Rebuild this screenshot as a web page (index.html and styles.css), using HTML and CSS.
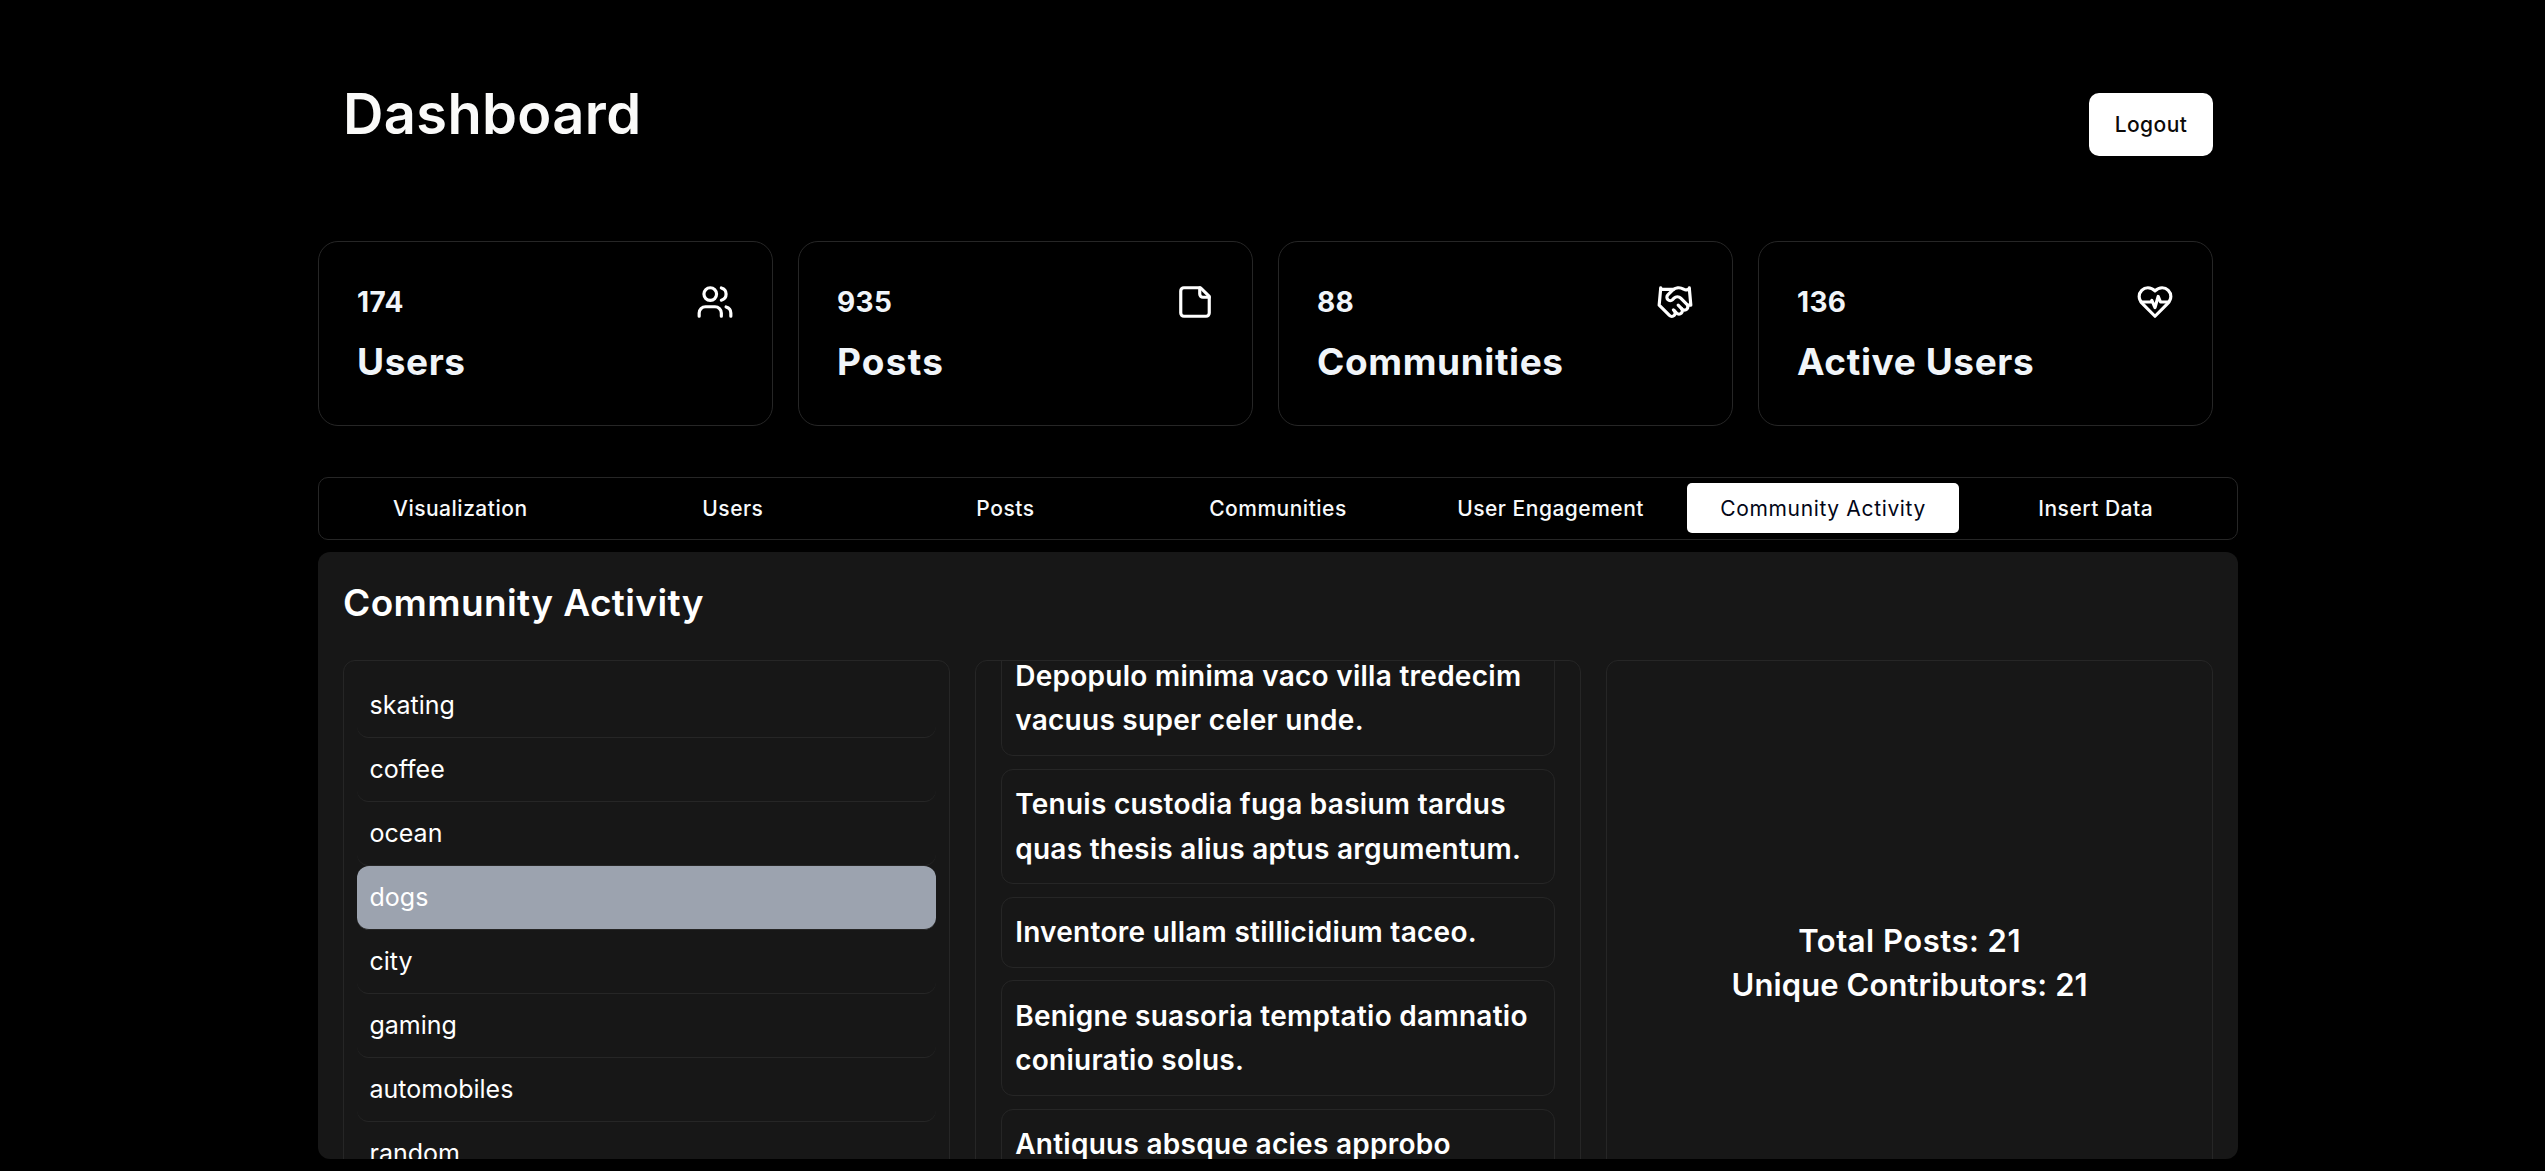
FILE: index.html
```html
<!DOCTYPE html>
<html lang="en">
<head>
<meta charset="utf-8">
<title>Dashboard</title>
<link rel="stylesheet" href="styles.css">
</head>
<body>
<main class="page">
  <header class="header">
    <h1 class="title">Dashboard</h1>
    <button class="logout">Logout</button>
  </header>

  <section class="stats">
    <article class="stat">
      <div class="stat-row"><span class="stat-value">174</span>
        <svg class="icon" viewBox="0 0 24 24"><path d="M16 21v-2a4 4 0 0 0-4-4H6a4 4 0 0 0-4 4v2"/><circle cx="9" cy="7" r="4"/><path d="M22 21v-2a4 4 0 0 0-3-3.87"/><path d="M16 3.13a4 4 0 0 1 0 7.75"/></svg>
      </div>
      <h2 class="stat-label">Users</h2>
    </article>
    <article class="stat">
      <div class="stat-row"><span class="stat-value">935</span>
        <svg class="icon" viewBox="0 0 24 24"><path d="M15.5 3H5a2 2 0 0 0-2 2v14c0 1.1.9 2 2 2h14a2 2 0 0 0 2-2V8.5L15.5 3Z"/><path d="M15 3v4a2 2 0 0 0 2 2h4"/></svg>
      </div>
      <h2 class="stat-label posts-label">Posts</h2>
    </article>
    <article class="stat">
      <div class="stat-row"><span class="stat-value">88</span>
        <svg class="icon" viewBox="0 0 24 24"><path d="m11 17 2 2a1 1 0 1 0 3-3"/><path d="m14 14 2.5 2.5a1 1 0 1 0 3-3l-3.88-3.88a3 3 0 0 0-4.24 0l-.88.88a1 1 0 1 1-3-3l2.81-2.81a5.79 5.79 0 0 1 7.06-.87l.47.28a2 2 0 0 0 1.42.25L21 4"/><path d="m21 3 1 11h-2"/><path d="M3 3 2 14l6.5 6.5a1 1 0 1 0 3-3"/><path d="M3 4h8"/></svg>
      </div>
      <h2 class="stat-label">Communities</h2>
    </article>
    <article class="stat">
      <div class="stat-row"><span class="stat-value">136</span>
        <svg class="icon" viewBox="0 0 24 24"><path d="M19 14c1.49-1.46 3-3.21 3-5.5A5.5 5.5 0 0 0 16.5 3c-1.76 0-3 .5-4.5 2-1.5-1.5-2.74-2-4.5-2A5.5 5.5 0 0 0 2 8.5c0 2.3 1.5 4.05 3 5.5l7 7Z"/><path d="M3.22 12H9.5l.5-1 2 4.5 2-7 1.5 3.5h5.27"/></svg>
      </div>
      <h2 class="stat-label">Active Users</h2>
    </article>
  </section>

  <nav class="tabs">
    <button class="tab">Visualization</button>
    <button class="tab">Users</button>
    <button class="tab">Posts</button>
    <button class="tab">Communities</button>
    <button class="tab">User Engagement</button>
    <button class="tab active">Community Activity</button>
    <button class="tab">Insert Data</button>
  </nav>

  <section class="panel">
    <h2 class="panel-title">Community Activity</h2>
    <div class="columns">
      <ul class="column communities">
        <li class="community">skating</li>
        <li class="community">coffee</li>
        <li class="community">ocean</li>
        <li class="community selected">dogs</li>
        <li class="community">city</li>
        <li class="community">gaming</li>
        <li class="community">automobiles</li>
        <li class="community">random</li>
      </ul>
      <div class="column posts">
        <article class="post">Depopulo minima vaco villa tredecim vacuus super celer unde.</article>
        <article class="post">Tenuis custodia fuga basium tardus quas thesis alius aptus argumentum.</article>
        <article class="post">Inventore ullam stillicidium taceo.</article>
        <article class="post">Benigne suasoria temptatio damnatio coniuratio solus.</article>
        <article class="post">Antiquus absque acies approbo</article>
      </div>
      <div class="column totals">
        <p>Total Posts: 21</p>
        <p class="contributors">Unique Contributors: 21</p>
      </div>
    </div>
  </section>
</main>
</body>
</html>
```
FILE: styles.css
```css
* {
  box-sizing: border-box;
  margin: 0;
  padding: 0;
}

body {
  background: #000;
  color: #fff;
  font-family: Inter, "Liberation Sans", sans-serif;
  overflow: hidden;
}

button {
  font: inherit;
  border: 0;
}

.page {
  width: 1920px;
  margin-left: 318px;
}

.header {
  display: flex;
  justify-content: space-between;
  align-items: flex-start;
  height: 241px;
  padding: 77px 25px 0;
}

.title {
  font-size: 56px;
  font-weight: 620;
  line-height: 75px;
  letter-spacing: 0.35px;
  color: #fafaf9;
}

.logout {
  width: 124px;
  height: 63px;
  margin-top: 16px;
  border-radius: 10px;
  background: #fff;
  color: #0c0a09;
  font-size: 21px;
  font-weight: 450;
  letter-spacing: 0.45px;
}

.stats {
  display: grid;
  grid-template-columns: repeat(4, 1fr);
  gap: 25px;
  padding-right: 25px;
}

.stat {
  height: 185px;
  padding: 37.5px 38px;
  border: 1px solid #262626;
  border-radius: 20px;
  color: #f1f5f9;
}

.stat-row {
  display: flex;
  justify-content: space-between;
  align-items: center;
  height: 45px;
}

.stat-value {
  font-size: 28px;
  font-weight: 650;
  letter-spacing: 0.35px;
}

.stat-label {
  margin-top: 14.5px;
  font-size: 37px;
  font-weight: 700;
  line-height: 45px;
  letter-spacing: 0.6px;
}

.posts-label {
  letter-spacing: 1.2px;
}

.icon {
  width: 38px;
  height: 38px;
  fill: none;
  stroke: #fff;
  stroke-width: 2;
  stroke-linecap: round;
  stroke-linejoin: round;
}

.tabs {
  display: grid;
  grid-template-columns: repeat(7, 1fr);
  height: 63px;
  margin-top: 51px;
  padding: 5px;
  border: 1px solid #262626;
  border-radius: 10px;
}

.tab {
  border-radius: 5px;
  background: transparent;
  color: #f8fafc;
  font-size: 21px;
  font-weight: 530;
  letter-spacing: 0.5px;
  white-space: nowrap;
}

.tab.active {
  height: 50px;
  background: #fff;
  color: #020617;
  font-weight: 430;
  letter-spacing: 0.65px;
}

.panel {
  height: 607px;
  margin-top: 12px;
  padding: 25px;
  border-radius: 12px;
  background: #171717;
  overflow: hidden;
}

.panel-title {
  font-size: 37px;
  font-weight: 630;
  line-height: 51px;
  letter-spacing: 0.38px;
}

.columns {
  display: grid;
  grid-template-columns: repeat(3, 1fr);
  gap: 25px;
  height: 605px;
  margin-top: 32px;
}

.column {
  min-width: 0;
  height: 605px;
  border: 1px solid #262626;
  border-radius: 12px;
  overflow: hidden;
}

.communities {
  padding: 12.5px;
  list-style: none;
}

.community {
  height: 64.15px;
  padding: 0 13px;
  border-bottom: 1px solid #262626;
  border-radius: 12px;
  font-size: 25px;
  line-height: 63.5px;
  letter-spacing: 0;
}

.community.selected {
  background: #9ca3af;
}

.posts {
  display: flex;
  flex-direction: column;
  gap: 12.3px;
  padding: 0 25px;
}

.post {
  flex: none;
  padding: 12.5px 10px 12.5px 13.5px;
  border: 1px solid #262626;
  border-radius: 12px;
  font-size: 28px;
  font-weight: 640;
  line-height: 44.4px;
  letter-spacing: 0.27px;
}

/* The feed is scrolled a little past its first post. */
.post:first-child {
  margin-top: -20.5px;
}

.totals {
  display: flex;
  flex-direction: column;
  justify-content: center;
  font-size: 31px;
  font-weight: 630;
  line-height: 44px;
  letter-spacing: 0.5px;
  text-align: center;
}

.contributors {
  letter-spacing: 0.1px;
}
```
